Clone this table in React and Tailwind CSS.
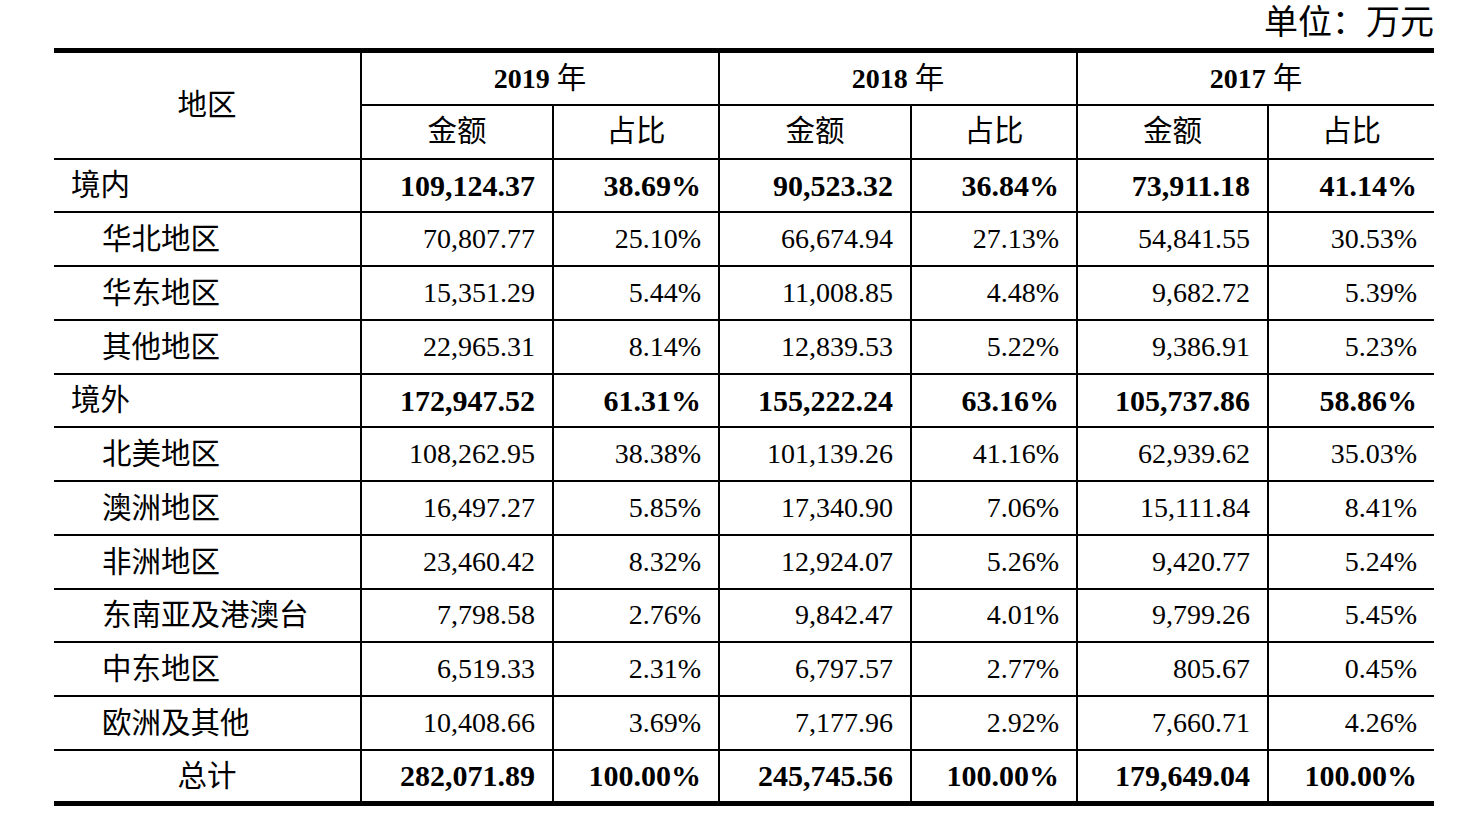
import React from 'react';

const rows = [
  { name: '境内', bold: true, level: 0, v: ['109,124.37', '38.69%', '90,523.32', '36.84%', '73,911.18', '41.14%'] },
  { name: '华北地区', level: 1, v: ['70,807.77', '25.10%', '66,674.94', '27.13%', '54,841.55', '30.53%'] },
  { name: '华东地区', level: 1, v: ['15,351.29', '5.44%', '11,008.85', '4.48%', '9,682.72', '5.39%'] },
  { name: '其他地区', level: 1, v: ['22,965.31', '8.14%', '12,839.53', '5.22%', '9,386.91', '5.23%'] },
  { name: '境外', bold: true, level: 0, v: ['172,947.52', '61.31%', '155,222.24', '63.16%', '105,737.86', '58.86%'] },
  { name: '北美地区', level: 1, v: ['108,262.95', '38.38%', '101,139.26', '41.16%', '62,939.62', '35.03%'] },
  { name: '澳洲地区', level: 1, v: ['16,497.27', '5.85%', '17,340.90', '7.06%', '15,111.84', '8.41%'] },
  { name: '非洲地区', level: 1, v: ['23,460.42', '8.32%', '12,924.07', '5.26%', '9,420.77', '5.24%'] },
  { name: '东南亚及港澳台', level: 1, v: ['7,798.58', '2.76%', '9,842.47', '4.01%', '9,799.26', '5.45%'] },
  { name: '中东地区', level: 1, v: ['6,519.33', '2.31%', '6,797.57', '2.77%', '805.67', '0.45%'] },
  { name: '欧洲及其他', level: 1, v: ['10,408.66', '3.69%', '7,177.96', '2.92%', '7,660.71', '4.26%'] },
  { name: '总计', bold: true, total: true, v: ['282,071.89', '100.00%', '245,745.56', '100.00%', '179,649.04', '100.00%'] },
];

const font = "font-['Liberation_Serif','Noto_Sans_CJK_SC',serif]";

export default function App() {
  return (
    <div className={`min-h-screen w-full bg-white text-black ${font}`}>
      <div className="ml-[54px] w-[1380px] pt-[2px]">
        <div className="h-[46px] text-right text-[34px] leading-[42px]">单位：万元</div>
        <table className="w-[1380px] table-fixed border-collapse border-t-[5px] border-b-[5px] border-black text-[28px]">
          <colgroup>
            <col className="w-[307px]" />
            <col className="w-[192px]" />
            <col className="w-[166px]" />
            <col className="w-[192px]" />
            <col className="w-[166px]" />
            <col className="w-[191px]" />
            <col className="w-[166px]" />
          </colgroup>
          <thead>
            <tr className="h-[54px]">
              <th rowSpan={2} className="border-b-2 border-black text-center text-[29.5px] font-normal">地区</th>
              {['2019', '2018', '2017'].map((y) => (
                <th key={y} colSpan={2} className="border-b-2 border-l-2 border-black text-center font-bold">
                  {y} <span className="text-[29.5px] font-normal">年</span>
                </th>
              ))}
            </tr>
            <tr className="h-[54px]">
              {[0, 1, 2].map((i) => (
                <React.Fragment key={i}>
                  <th className="border-b-2 border-l-2 border-black text-center text-[29.5px] font-normal">金额</th>
                  <th className="border-b-2 border-l-2 border-black text-center text-[29.5px] font-normal">占比</th>
                </React.Fragment>
              ))}
            </tr>
          </thead>
          <tbody>
            {rows.map((r, idx) => (
              <tr key={r.name} className="h-[53.75px]">
                <td
                  className={`border-black text-[29.5px] ${idx < rows.length - 1 ? 'border-b-2' : ''} ${
                    r.total ? 'text-center' : r.level === 1 ? 'pl-[48px]' : 'pl-[17px]'
                  }`}
                >
                  {r.name}
                </td>
                {r.v.map((val, i) => (
                  <td
                    key={i}
                    className={`border-l-2 border-black pr-[17px] text-right ${
                      idx < rows.length - 1 ? 'border-b-2' : ''
                    } ${r.bold ? 'text-[30px] font-bold' : ''}`}
                  >
                    {val}
                  </td>
                ))}
              </tr>
            ))}
          </tbody>
        </table>
      </div>
    </div>
  );
}
